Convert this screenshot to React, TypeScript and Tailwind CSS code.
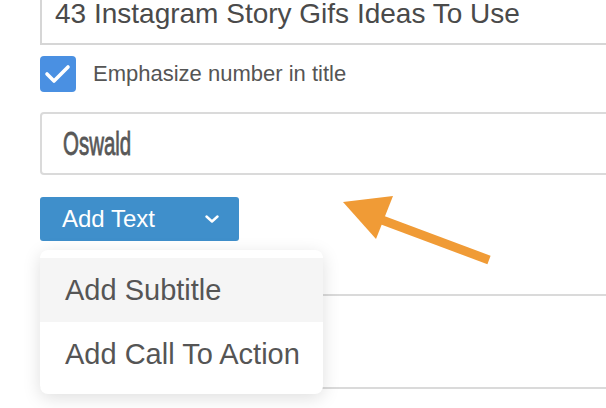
import React from "react";

export default function App() {
  return (
    <div className="relative w-[606px] h-[408px] overflow-hidden bg-white pl-[40px] font-['Liberation_Sans',Arial,sans-serif] text-[#4d4d4d]">
      {/* Title input */}
      <div className="-mt-[20px] h-[65px] w-[640px] border-2 border-[#d6d6d6] pl-[13px] pt-[16px] text-[28px] leading-[32px] whitespace-nowrap text-[#4a4a4a]">
        43 Instagram Story Gifs Ideas To Use
      </div>

      {/* Checkbox row */}
      <div className="mt-[11px] flex h-[36px] items-center gap-[17px]">
        <div className="flex h-[36px] w-[36px] items-center justify-center rounded-[4px] bg-[#4a90e2]">
          <svg width="36" height="36" viewBox="0 0 36 36">
            <polyline
              points="7,18 14,25 28,11"
              fill="none"
              stroke="white"
              strokeWidth="3.6"
              strokeLinecap="round"
              strokeLinejoin="round"
            />
          </svg>
        </div>
        <span className="text-[22px] leading-[26px] text-[#555555] whitespace-nowrap">
          Emphasize number in title
        </span>
      </div>

      {/* Font input */}
      <div className="mt-[20px] flex h-[63px] w-[640px] items-center rounded-[4px] border-2 border-[#dadada] pl-[21px]">
        <span className="inline-block origin-left scale-x-[0.62] text-[33px] leading-[36px] text-[#575757] [-webkit-text-stroke:0.8px_#575757]">
          Oswald
        </span>
      </div>

      {/* Add Text button with dropdown */}
      <div className="relative mt-[22px] w-fit">
        <div className="flex h-[44px] w-[199px] items-center justify-between rounded-[3px] bg-[#3f8fcb] pl-[22px] pr-[20px] text-[24px] leading-[28px] text-white">
          <span>Add Text</span>
          <svg width="14" height="8" viewBox="0 0 14 8">
            <path
              d="M1.5 1.5 L7 6.5 L12.5 1.5"
              fill="none"
              stroke="white"
              strokeWidth="2.4"
              strokeLinecap="round"
              strokeLinejoin="round"
            />
          </svg>
        </div>
        <div className="absolute left-0 top-[53px] z-10 w-[283px] rounded-[8px] bg-white py-[8px] shadow-[0_4px_18px_rgba(0,0,0,0.13)]">
          <div className="flex h-[64px] items-center bg-[#f5f5f5] pl-[25px] text-[29px] leading-[32px] text-[#555555] whitespace-nowrap">
            Add Subtitle
          </div>
          <div className="flex h-[64px] items-center pl-[25px] text-[29px] leading-[32px] text-[#555555] whitespace-nowrap">
            Add Call To Action
          </div>
        </div>
      </div>

      {/* Next input (under menu) */}
      <div className="mt-[53px] h-[95px] w-[640px] rounded-[4px] border-2 border-[#dadada]" />

      {/* Annotation arrow */}
      <svg
        className="pointer-events-none absolute left-0 top-0"
        width="606"
        height="408"
        viewBox="0 0 606 408"
      >
        <polygon points="343,202 393,196 376,239" fill="#f09b36" />
        <line x1="382" y1="220" x2="489" y2="260" stroke="#f09b36" strokeWidth="9" />
      </svg>
    </div>
  );
}
